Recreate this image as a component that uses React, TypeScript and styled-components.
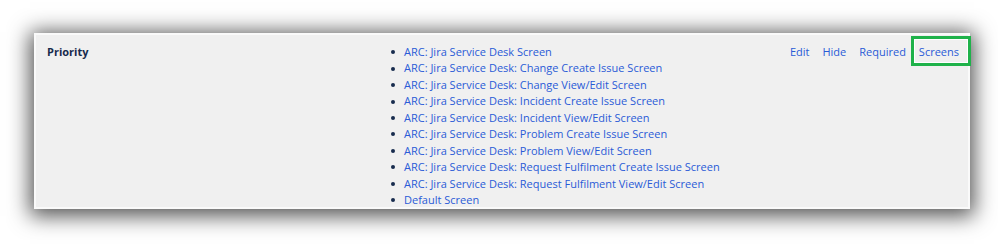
import styled, { createGlobalStyle } from "styled-components";

const screens = [
  "ARC: Jira Service Desk Screen",
  "ARC: Jira Service Desk: Change Create Issue Screen",
  "ARC: Jira Service Desk: Change View/Edit Screen",
  "ARC: Jira Service Desk: Incident Create Issue Screen",
  "ARC: Jira Service Desk: Incident View/Edit Screen",
  "ARC: Jira Service Desk: Problem Create Issue Screen",
  "ARC: Jira Service Desk: Problem View/Edit Screen",
  "ARC: Jira Service Desk: Request Fulfilment Create Issue Screen",
  "ARC: Jira Service Desk: Request Fulfilment View/Edit Screen",
  "Default Screen",
];

const actions = ["Edit", "Hide", "Required", "Screens"];

export default function App() {
  return (
    <>
      <GlobalStyle />
      <Page>
        <Panel>
          <FieldName>Priority</FieldName>
          <ScreenList>
            {screens.map((name) => (
              <ScreenItem key={name}>
                <Link href="#">{name}</Link>
              </ScreenItem>
            ))}
          </ScreenList>
          <Actions>
            {actions.map((action) => (
              <ActionLink key={action} href="#" highlighted={action === "Screens"}>
                {action}
              </ActionLink>
            ))}
          </Actions>
        </Panel>
      </Page>
    </>
  );
}

const GlobalStyle = createGlobalStyle`
  html, body {
    margin: 0;
    padding: 0;
    background: #ffffff;
  }
  body {
    font-family: "Open Sans", "Noto Sans", sans-serif;
    font-size: 11px;
  }
`;

const Page = styled.div`
  width: 998px;
  height: 244px;
  padding: 33px 0 0 34px;
  box-sizing: border-box;
  overflow: hidden;
`;

const Panel = styled.div`
  width: 936px;
  height: 176px;
  box-sizing: border-box;
  background: #f0f0f0;
  border: 2px solid #fafafa;
  box-shadow: 0 3px 20px 4px rgba(0, 0, 0, 0.68);
  display: grid;
  grid-template-columns: 344px 1fr auto;
  padding: 9px 0 0 11px;
`;

const FieldName = styled.div`
  font-weight: 700;
  color: #172b4d;
  line-height: 16.45px;
`;

const ScreenList = styled.ul`
  list-style: none;
  margin: 0;
  padding: 0;
`;

const ScreenItem = styled.li`
  display: flex;
  align-items: center;
  gap: 9px;
  line-height: 16.45px;

  &::before {
    content: "";
    width: 4px;
    height: 4px;
    border-radius: 50%;
    background: #172b4d;
  }
`;

const Link = styled.a`
  color: #2a5bd7;
  text-decoration: none;
`;

const Actions = styled.div`
  display: flex;
  gap: 13px;
  padding-right: 9px;
  align-self: start;
  line-height: 16.45px;
`;

const ActionLink = styled.a<{ highlighted?: boolean }>`
  position: relative;
  color: #2a5bd7;
  text-decoration: none;

  ${({ highlighted }) =>
    highlighted &&
    `
    &::after {
      content: "";
      position: absolute;
      left: -8px;
      right: -12px;
      top: -8px;
      bottom: -6px;
      border: 3px solid #1fb24a;
      box-shadow: inset 0 0 0 1px #ffffff;
    }
  `}
`;
